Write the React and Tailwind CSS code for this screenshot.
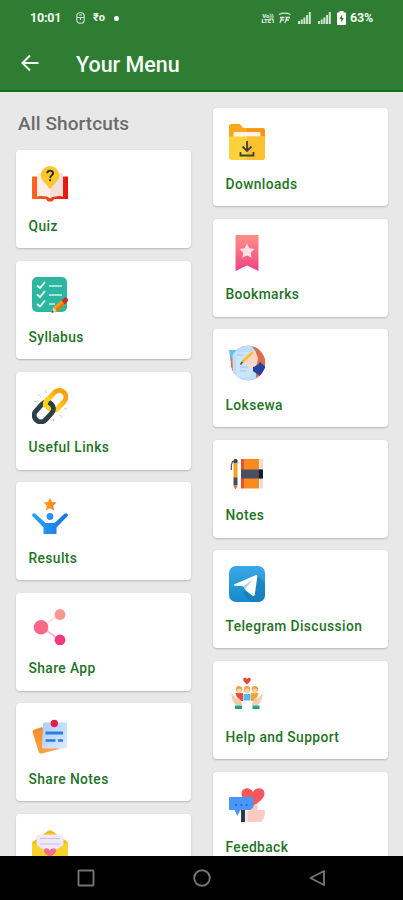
import React from 'react';

const QuizIcon = () => (
  <svg viewBox="0 0 36 36" className="size-9">
    <defs>
      <linearGradient id="quizBook" x1="0" x2="1">
        <stop offset="0" stopColor="#ff6a1f" />
        <stop offset="1" stopColor="#e8130e" />
      </linearGradient>
    </defs>
    <path d="M0 10.500h5v19h26v-19h5V33H22c-.5 3.400-7.500 3.400-8 0H0z" fill="url(#quizBook)" />
    <path d="M5 7.500c5-1.500 10-.5 13 2 3-2.500 8-3.500 13-2v23c-5-1-10-.5-13 2-3-2.500-8-3-13-2z" fill="#fbeeea" />
    <path d="M18 10c3-2.500 8-4 13-2.500v23c-5-1-10-.5-13 2z" fill="#f3dfd9" />
    <path d="M18 0a9.200 9.200 0 0 1 9.200 9.200c0 6-6 8.300-8.200 13.300h-2c-2-5-8.200-7.300-8.200-13.300A9.200 9.200 0 0 1 18 0z" fill="#fdc72c" />
    <path d="M15.300 7.300c.1-3.600 5.700-3.500 5.700 0 0 2-2.800 2.200-2.800 4.600" fill="none" stroke="#2c2a20" strokeWidth="1.900" />
    <circle cx="18.100" cy="14.200" r="1.100" fill="#2c2a20" />
  </svg>
);

const SyllabusIcon = () => (
  <svg viewBox="0 0 36 36" className="size-9">
    <rect x="0" y="0" width="35" height="35" rx="5" fill="#2db7a0" />
    <path d="M5 8.500 8 11l5-6M5 17.500 8 20l5-6M5 27l3 2.500 5-6" fill="none" stroke="#eefbf8" strokeWidth="1.800" />
    <path d="M17 9h13M17 18h13M17 27h6" stroke="#c9f1e9" strokeWidth="1.600" />
    <path d="m19.500 36 2-6 4 4z" fill="#f0cfa0" />
    <path d="m19.500 36 .8-2.600 1.700 1.700z" fill="#444" />
    <path d="m21.500 30 9-7.500 3.500 4-9 8z" fill="#f19a1d" />
    <path d="m23.500 32 9-7.500 1.500 2-9 8z" fill="#d97b12" />
    <path d="m29.500 23.300 3-2.600c2-1 4.500 1.500 3.200 3.500l-2.700 3.200z" fill="#c4302b" />
  </svg>
);

const LinksIcon = () => (
  <svg viewBox="0 0 36 36" className="size-9">
    <defs>
      <linearGradient id="linkGold" x1="0" x2="1">
        <stop offset="0.300" stopColor="#ffd21c" />
        <stop offset="0.800" stopColor="#fba312" />
      </linearGradient>
    </defs>
    <g fill="none" strokeWidth="5">
      <rect x="-11" y="-6.600" width="22" height="13.200" rx="6.600" transform="translate(24.300 12.300) rotate(-48)" stroke="url(#linkGold)" />
      <rect x="-11" y="-6.600" width="22" height="13.200" rx="6.600" transform="translate(11.800 24) rotate(-48)" stroke="#2b4149" />
      <path d="M13.800 19c-1.500-3 .2-6.300 2.700-9" stroke="#ffd21c" />
    </g>
    <path d="m6 6 3 3M13 2l2 3M1.500 13l3 1M21 31l1 3M28 27l2.500 3M32 20l3 1.500" stroke="#d5c9c3" strokeWidth="1" />
  </svg>
);

const ResultsIcon = () => (
  <svg viewBox="0 0 36 36" className="size-9">
    <defs>
      <linearGradient id="resStar" x1="0" x2="1">
        <stop offset="0" stopColor="#ffa62b" />
        <stop offset="1" stopColor="#ef7d0f" />
      </linearGradient>
      <linearGradient id="resBody" x1="0" x2="1">
        <stop offset="0" stopColor="#2aa3f7" />
        <stop offset="1" stopColor="#1875e0" />
      </linearGradient>
    </defs>
    <path d="m18 0 2 4 4.500.6-3.300 3.100.9 4.700-4.100-2.200-4.100 2.200.9-4.700-3.300-3.100L16 4z" fill="url(#resStar)" />
    <circle cx="18" cy="18.500" r="3.400" fill="#2b91ec" />
    <path d="M.3 18c-1-2 1.500-3.700 3.200-2.200L13.500 25h9l10-9.200c1.700-1.500 4.200.2 3.200 2.200L24.500 29.500V36h-13v-6.500z" fill="url(#resBody)" />
  </svg>
);

const ShareAppIcon = () => (
  <svg viewBox="0 0 36 36" className="size-9">
    <path d="m9 18 19-13" stroke="#fde0e0" strokeWidth="1.800" />
    <path d="m9 18 19 13" stroke="#fcb3c4" strokeWidth="1.800" />
    <circle cx="9" cy="18.300" r="7.300" fill="#fc6886" />
    <circle cx="28" cy="5.500" r="5.400" fill="#fc9490" />
    <circle cx="28" cy="31" r="5.400" fill="#f0387b" />
  </svg>
);

const ShareNotesIcon = () => (
  <svg viewBox="0 0 36 36" className="size-9">
    <defs>
      <linearGradient id="notePaper" x1="0" y1="0" x2="1" y2="1">
        <stop offset="0" stopColor="#a9cdfd" />
        <stop offset="1" stopColor="#dcebff" />
      </linearGradient>
      <linearGradient id="noteBack" x1="0" y1="0" x2="0" y2="1">
        <stop offset="0" stopColor="#f38b2a" />
        <stop offset="1" stopColor="#ffa340" />
      </linearGradient>
    </defs>
    <path d="m1 11 9-3 18 20-1 2-17 4.500c-2 .4-3-.5-3.500-2L.5 13z" fill="url(#noteBack)" />
    <path d="M12 3.500h21.500c1 0 1.500.7 1.500 1.600V28c0 1-.7 1.500-1.500 1.500H11.500c-1 0-1.800-.7-1.500-2l1-22c0-1 .2-2 1-2z" fill="url(#notePaper)" />
    <path d="M13.500 14H31" stroke="#307bdf" strokeWidth="3" />
    <path d="M13.500 21.500h10M26 21.500h5" stroke="#307bdf" strokeWidth="2.500" />
    <circle cx="22.300" cy="4.500" r="3.700" fill="#e21f48" />
  </svg>
);

const MailIcon = () => (
  <svg viewBox="0 0 36 36" className="size-9">
    <path d="M0 12 15 1.500c2-2 4-2 6 0L36 12v24H0z" fill="#f0bd19" />
    <path d="M0 0h36v12L21 1.500c-2-2-4-2-6 0L0 12z" fill="#fff" />
    <path d="M4.500 4.500h27V30h-27z" fill="#f0e9fb" />
    <path d="M8 8.500h20M8 14h20" stroke="#c7bddd" strokeWidth="1.200" />
    <path d="m0 12 12 8h12l12-8v24H0z" fill="#fcd02d" />
    <path d="M18 27c-5-3-6-5-6-6.500 0-3 4.500-3 6 0 1.500-3 6-3 6 0 0 1.500-1 3.500-6 6.500z" fill="#f56b92" />
  </svg>
);

const DownloadsIcon = () => (
  <svg viewBox="0 0 36 36" className="size-9">
    <path d="M0 2.500C0 1 1 0 2.500 0H10c2 0 3 4 5 4h18.500C35 4 36 5 36 6.500V20H0z" fill="#fba71c" />
    <path d="M18 4.500h15.500c1.500 0 2.500.5 2.500 2V20H18z" fill="#f79417" />
    <rect x="4.500" y="8" width="27" height="9" rx="1" fill="#fff2e2" />
    <path d="M0 14c0-1 .5-1.500 1.500-1.500h33c1 0 1.500.5 1.500 1.500v19.500c0 1.500-1 2.500-2.500 2.500h-31C1 36 0 35 0 33.500z" fill="#ffd23c" />
    <path d="M18 12.500h16.500c1 0 1.500.5 1.500 1.500v19.500c0 1.500-1 2.500-2.500 2.500H18z" fill="#fdc02f" />
    <path d="M18 17v9.500M13.500 22.500 18 27l4.500-4.500M11.500 28v3.500h13V28" fill="none" stroke="#3b4238" strokeWidth="1.800" />
  </svg>
);

const BookmarksIcon = () => (
  <svg viewBox="0 0 36 36" className="size-9">
    <defs>
      <linearGradient id="bookmark" x1="0" y1="0" x2="0" y2="1">
        <stop offset="0" stopColor="#fb9086" />
        <stop offset="0.500" stopColor="#fa6b84" />
        <stop offset="1" stopColor="#ee4189" />
      </linearGradient>
    </defs>
    <path d="M6.500 0h23v36L18 30.500 6.500 36z" fill="url(#bookmark)" />
    <path d="m18 8.500 2.300 4.700 5.200.8-3.800 3.700.9 5.100-4.600-2.400-4.600 2.400.9-5.100-3.800-3.700 5.200-.8z" fill="#ffe0e5" />
  </svg>
);

const LoksewaIcon = () => (
  <svg viewBox="0 0 36 36" className="size-9">
    <defs>
      <clipPath id="lokClip">
        <circle cx="19" cy="18" r="17.500" />
      </clipPath>
    </defs>
    <path d="M0 5h9v8l-6 4-1.500-1z" fill="#5cc4ee" />
    <g clipPath="url(#lokClip)">
      <circle cx="19" cy="18" r="17.500" fill="#d96d4c" />
      <path d="M3 3 22 0l5 7v26l-2 3H9L4 30z" fill="#bddffb" />
      <path d="M7 7h16l1 19-3 6H7z" fill="#cbe5fb" />
      <path d="M8 10h7M11 22h8M11 26h7" stroke="#a6c5e8" strokeWidth="1" />
      <path d="m16 12 8-6c3 1 4 4 5 7l-1 6-5 4-8-5z" fill="#fcd6c5" />
      <path d="M24 22c3-.5 6-2.500 7-5l6 5-6 9-7-5z" fill="#27429c" />
    </g>
    <path d="m13 17 11-10" stroke="#f4bd35" strokeWidth="2.500" />
    <path d="m11.500 19.500 2-2.500" stroke="#465473" strokeWidth="1.800" />
  </svg>
);

const NotesIcon = () => (
  <svg viewBox="0 0 36 36" className="size-9">
    <rect x="12" y="3" width="3.500" height="29.500" fill="#e9512f" />
    <rect x="15" y="3" width="15" height="29.500" fill="#f98a1e" />
    <rect x="31" y="3" width="3" height="29.500" fill="#fbd9c9" />
    <rect x="12" y="13.500" width="20" height="9" fill="#474f60" />
    <rect x="30" y="13.500" width="4" height="9" fill="#141c2d" />
    <path d="M4.500 7h4v15h-4z" fill="#f6a128" />
    <path d="M4.500 21.500h4v8h-4z" fill="#454c5c" />
    <path d="M4.500 7V4.500l1-1.500h2l1 1.500V7z" fill="#3c4252" />
    <path d="M4.500 29.500h4L7 33H6z" fill="#ed6b31" />
    <path d="M5 5.500H3.500L2.300 9v5" fill="none" stroke="#4b5261" strokeWidth="1.200" />
  </svg>
);

const TelegramIcon = () => (
  <svg viewBox="0 0 36 36" className="size-9">
    <defs>
      <linearGradient id="telegram" x1="0" y1="0" x2="0" y2="1">
        <stop offset="0" stopColor="#38a8e6" />
        <stop offset="1" stopColor="#188acb" />
      </linearGradient>
    </defs>
    <rect width="36" height="36" rx="7" fill="url(#telegram)" />
    <path d="m28 9 8 8v12c0 4-3 7-7 7h-8l-7-9z" fill="#167ab5" opacity="0.600" />
    <path d="M5.500 18.200 26.500 9.200c1.300-.5 2 .2 1.800 1.600L25.800 28.500c-.2 1.500-1.200 2-2.500 1l-6.500-5-2.400-4.300-8.600-.5c-1.400-.2-1.500-.9-.3-1.500z" fill="#fff" />
    <path d="m14.400 20.200 10-7.200-7.800 9.500.2 2z" fill="#a9d4ef" />
  </svg>
);

const SupportIcon = () => (
  <svg viewBox="0 0 36 36" className="size-9">
    <path d="M18 7.500C15 5.200 14.200 4 14.200 2.600c0-2.500 3-2.400 3.800-.4.800-2 3.800-2.100 3.800.4 0 1.400-.8 2.600-3.800 4.900z" fill="#ea4638" />
    <path d="M6.500 16h7.500v8H9z" fill="#e84b3e" />
    <path d="M22 16h7.500L27 24h-5z" fill="#f1a335" />
    <path d="M14.500 17h7v6.500h-7z" fill="#55b9e9" />
    {[10, 18, 26].map(cx => (
      <g key={cx}>
        <circle cx={cx} cy="12.300" r="3.200" fill="#f3a33b" />
        <circle cx={cx} cy="14" r="2.400" fill="#fbd2a8" />
      </g>
    ))}
    <path d="M2.500 16c0 5 1 8 4.500 12h6c0-4-2-6-5-8l-.5 2zM33.500 16c0 5-1 8-4.500 12h-6c0-4 2-6 5-8l.5 2z" fill="#f7cbaa" />
    <path d="M6 28.500h7V32H6zM23.500 28.500h7V32h-7z" fill="#22a18a" />
  </svg>
);

const FeedbackIcon = () => (
  <svg viewBox="0 0 36 36" className="size-9">
    <path d="M24 18.500C15 12 12 8.500 12.500 5c1-6 9-6 11.500-1C26.500-1 35-1 35.500 5c.3 4-3.500 8-11.500 13.500z" fill="#f7565c" />
    <path d="M1.500 9h21.500c1 0 1.500.5 1.500 1.500v10c0 1-.5 1.500-1.500 1.500H11.500L8.300 28l-2.800-6h-4C.5 22 0 21.500 0 20.500v-10C0 9.500.5 9 1.500 9z" fill="#4a97fa" />
    <path d="M6 17h2M11.300 17h2M16.600 17h2" stroke="#245eb0" strokeWidth="1.500" />
    <path d="M18 23.500c4-1 6-3 8-7.500 3 0 3.500 3 2 6h6.500c2 0 2 2.800.5 3 1.500.5 1 3-.5 3 1 .8.500 3-1 3 .6 1.500-.5 3-2 3H18z" fill="#ffcac0" />
    <path d="M12 22h4v12h-4z" fill="#2c3954" />
    <path d="M16 22.500h2.500V34H16z" fill="#e8edf5" />
  </svg>
);

const leftItems = [
  { label: 'Quiz', Icon: QuizIcon },
  { label: 'Syllabus', Icon: SyllabusIcon },
  { label: 'Useful Links', Icon: LinksIcon },
  { label: 'Results', Icon: ResultsIcon },
  { label: 'Share App', Icon: ShareAppIcon },
  { label: 'Share Notes', Icon: ShareNotesIcon },
  { label: '', Icon: MailIcon },
];

const rightItems = [
  { label: 'Downloads', Icon: DownloadsIcon },
  { label: 'Bookmarks', Icon: BookmarksIcon },
  { label: 'Loksewa', Icon: LoksewaIcon },
  { label: 'Notes', Icon: NotesIcon },
  { label: 'Telegram Discussion', Icon: TelegramIcon },
  { label: 'Help and Support', Icon: SupportIcon },
  { label: 'Feedback', Icon: FeedbackIcon },
];

const ShortcutCard = ({ label, Icon }) => (
  <div className="h-[98px] shrink-0 rounded-[4px] bg-white pt-4 pl-[13px] shadow-[0_1px_2px_rgba(0,0,0,0.22)]">
    <div className="pl-[3.500px]">
      <Icon />
    </div>
    <div className="mt-[13.600px] text-[13.800px] leading-5 font-medium tracking-[0.400px] whitespace-nowrap text-[#1f7426]">
      {label}
    </div>
  </div>
);

const SignalIcon = () => (
  <svg viewBox="0 0 13 12" className="h-3 w-[13px]" fill="#d3e6d4">
    <path d="M0 9h2v3H0zM2.700 7.500h2V12h-2zM5.400 5.500h2V12h-2zM8.100 3h2v9h-2zM10.800 0h2v12h-2z" />
  </svg>
);

const StatusBar = () => (
  <div className="flex h-[35px] items-center pt-px pr-[30px] pl-[30px] text-[12.500px] font-bold text-[#f1f8f1]">
    <span className="w-[46px] tracking-[-0.200px]">10:01</span>
    <svg viewBox="0 0 9 12" className="h-3 w-[9px]" fill="none" stroke="#cfe4d0" strokeWidth="1.100">
      <rect x="0.800" y="0.800" width="7.400" height="10.400" rx="3" />
      <path d="M1 5.500h7M3 3h3M4.500 5.500V8" />
    </svg>
    <span className="ml-[8px] w-[14px] text-[11px] font-bold">₹o</span>
    <span className="ml-[7px] size-[5px] rounded-full bg-white" />
    <div className="ml-auto flex items-center">
      <div className="w-[14px] text-center text-[6px] leading-[5.500px] font-bold">
        <div>Vo))</div>
        <div>LTE1</div>
      </div>
      <svg viewBox="0 0 13 12" className="ml-[3px] h-3 w-[13px]" fill="none" stroke="#d9ebda" strokeWidth="1.300">
        <path d="M1 2.500c3-1.500 8-1.500 11.500 0M2 5.500h4.500M7.500 5.500H12M2 11l2-6M7 11l2-6M3 8h3M8 8h3" />
      </svg>
      <div className="ml-[7px] flex gap-[7px]">
        <SignalIcon />
        <SignalIcon />
      </div>
      <svg viewBox="0 0 9 14" className="ml-[6px] h-[14px] w-[9px]">
        <path d="M2.500 0h4v1.500H8c.6 0 1 .4 1 1V13c0 .6-.4 1-1 1H1c-.6 0-1-.4-1-1V2.500c0-.6.400-1 1-1h1.500z" fill="#fff" />
        <path d="M5 3.500 2.500 8h1.700L4 11.500 6.700 7H5z" fill="#2f7d32" />
      </svg>
      <span className="ml-1 tracking-[-0.200px]">63%</span>
    </div>
  </div>
);

const NavBar = () => (
  <div className="flex h-11 shrink-0 items-center justify-between bg-black px-[77px]">
    <svg viewBox="0 0 18 18" className="size-[18px]" fill="none" stroke="#747474" strokeWidth="1.900">
      <rect x="1.500" y="1.500" width="15" height="15" rx="1" />
    </svg>
    <svg viewBox="0 0 18 18" className="size-[18px]" fill="none" stroke="#747474" strokeWidth="1.900">
      <circle cx="9" cy="9" r="7.800" />
    </svg>
    <svg viewBox="0 0 18 18" className="size-[18px]" fill="none" stroke="#747474" strokeWidth="1.900" strokeLinejoin="round">
      <path d="M16 2v14L2.500 9z" />
    </svg>
  </div>
);

export default function App() {
  return (
    <div className="flex h-[900px] w-[403px] flex-col overflow-hidden bg-[#e8e8e8] font-[Roboto,sans-serif]">
      <header className="h-[92px] shrink-0 border-b-2 border-[#137316] bg-[#2f7d32]">
        <StatusBar />
        <div className="flex h-[57px] items-center pl-[21px]">
          <svg viewBox="0 0 18 18" className="-mt-px size-[18px]" fill="none" stroke="#f4faf4" strokeWidth="2">
            <path d="M17.500 9H2M9 1.500 1.500 9 9 16.500" />
          </svg>
          <h1 className="mt-[3px] ml-[37px] text-[21.500px] font-medium text-[#f6fbf6]">Your Menu</h1>
        </div>
      </header>

      <main className="flex min-h-0 flex-1 gap-[22px] overflow-hidden px-[15.500px]">
        <div className="flex w-[175px] shrink-0 flex-col gap-[12.600px]">
          <h2 className="-mb-[12.600px] h-[58.400px] shrink-0 pt-[18px] pl-[2.500px] text-[19px] leading-7 font-medium tracking-[0.100px] whitespace-nowrap text-[#6b6b6b]">
            All Shortcuts
          </h2>
          {leftItems.map((item, i) => (
            <ShortcutCard key={i} {...item} />
          ))}
        </div>
        <div className="flex w-[175px] shrink-0 flex-col gap-[12.600px] pt-4">
          {rightItems.map((item, i) => (
            <ShortcutCard key={i} {...item} />
          ))}
        </div>
      </main>

      <NavBar />
    </div>
  );
}
